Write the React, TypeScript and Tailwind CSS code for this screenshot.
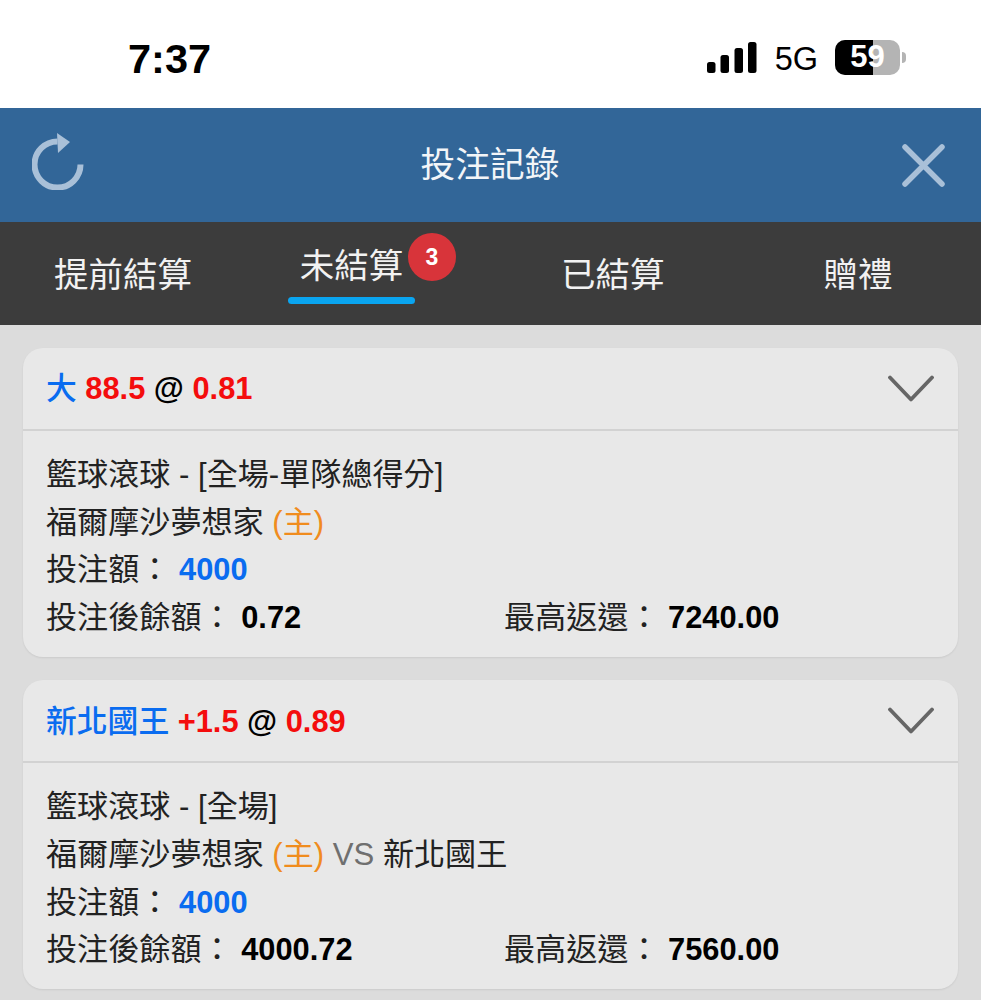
import React from 'react';

const font = { fontFamily: '"Liberation Sans", "Noto Sans CJK TC", sans-serif' };

const Chevron = () => (
    <svg width="46" height="27" viewBox="0 0 46 27" fill="none" stroke="#666666" strokeWidth="3.8" strokeLinecap="round" strokeLinejoin="round">
        <path d="M2 2.5 L23 24.5 L44 2.5" />
    </svg>
);

type Bet = {
    team: string;
    line: string;
    odds: string;
    market: string;
    away?: string;
    balance: string;
    payout: string;
};

const bets: Bet[] = [
    { team: '大', line: '88.5', odds: '0.81', market: '籃球滾球 - [全場-單隊總得分]', balance: '0.72', payout: '7240.00' },
    { team: '新北國王', line: '+1.5', odds: '0.89', market: '籃球滾球 - [全場]', away: '新北國王', balance: '4000.72', payout: '7560.00' },
];

const BetCard = ({ bet }: { bet: Bet }) => (
    <div className="rounded-[20px] bg-[#e8e8e8] shadow-[0_1px_2px_rgba(0,0,0,0.08)]">
        <div className="box-content flex h-[81px] items-center justify-between border-b-[2px] border-[#d2d2d2] pl-[23px] pr-[24px]">
            <div className="pt-[2px] text-[30.8px] font-bold text-black">
                <span className="font-medium text-[#0a6cf0]">{bet.team}</span>{' '}
                <span className="text-[#f40d0d]">{bet.line}</span> @ <span className="text-[#f40d0d]">{bet.odds}</span>
            </div>
            <Chevron />
        </div>
        <div className="px-[23px] pb-[15px] pt-[20px] text-[31.1px] leading-[47.7px] text-[#222222]">
            <div>{bet.market}</div>
            <div>
                福爾摩沙夢想家 <span className="text-[#f08c1e]">(主)</span>
                {bet.away && (
                    <>
                        {' '}
                        <span className="text-[#6f6f6f]">VS</span> {bet.away}
                    </>
                )}
            </div>
            <div>
                投注額： <span className="text-[30.8px] font-bold text-[#0a6cf0]">4000</span>
            </div>
            <div className="flex">
                <div className="w-[458px]">
                    投注後餘額： <span className="text-[30.8px] font-bold text-black">{bet.balance}</span>
                </div>
                <div>
                    最高返還： <span className="text-[30.8px] font-bold text-black">{bet.payout}</span>
                </div>
            </div>
        </div>
    </div>
);

export default function App() {
    return (
        <div className="h-[1000px] w-[981px] overflow-hidden bg-[#dcdcdc]" style={font}>
            <div className="flex h-[108px] items-center justify-between bg-white pl-[128px] pr-[75px] pt-[10px]">
                <span className="text-[41.5px] font-bold text-black">7:37</span>
                <div className="flex items-center">
                    <svg className="mb-[4px]" width="50" height="31" viewBox="0 0 50 31" fill="#000000">
                        <rect x="0" y="20" width="8.5" height="11" rx="2.5" />
                        <rect x="13.5" y="13" width="8.5" height="18" rx="2.5" />
                        <rect x="27.5" y="6" width="8.5" height="25" rx="2.5" />
                        <rect x="41" y="0" width="8.5" height="31" rx="2.5" />
                    </svg>
                    <span className="ml-[18px] text-[32.5px] text-black">5G</span>
                    <div className="relative mb-[4px] ml-[17px] flex h-[35px] w-[65px] items-center justify-center overflow-hidden rounded-[10px] bg-[#b4b4b4]">
                        <div className="absolute inset-y-0 left-0 w-[38px] bg-black" />
                        <span className="relative text-[31px] font-bold text-white">59</span>
                    </div>
                    <div className="mb-[4px] ml-[2px] h-[11px] w-[4px] rounded-r-full bg-[#b4b4b4]" />
                </div>
            </div>

            <div className="flex h-[114px] items-center justify-between bg-[#326698] pl-[32px] pr-[36px]">
                <svg className="mb-[7px]" width="52" height="57" viewBox="0 0 52 57" fill="none">
                    <path d="M48.5 31.5 A23 23 0 1 1 25.5 8.5" stroke="#a9c0d8" strokeWidth="6" />
                    <path d="M25 0 L38 9 L26 20 Z" fill="#a9c0d8" />
                </svg>
                <span className="-ml-[6px] text-[34.7px] text-[#f2f5f8]">投注記錄</span>
                <svg width="43" height="43" viewBox="0 0 43 43" stroke="#a9c0d8" strokeWidth="5.5" strokeLinecap="round">
                    <path d="M3 3 L40 40 M40 3 L3 40" />
                </svg>
            </div>

            <div className="flex h-[103px] bg-[#3c3c3c] pl-[54px] text-[34.5px] text-[#f2f2f2]">
                <div className="mt-[28px]">提前結算</div>
                <div className="relative ml-[96px] mt-[19px] w-[127px] text-center">
                    未結算
                    <span className="absolute left-[120px] top-[-8px] flex h-[48px] w-[48px] items-center justify-center rounded-full bg-[#d8343a] text-[23px] font-bold text-white">
                        3
                    </span>
                    <div className="absolute left-0 top-[56px] h-[7px] w-[127px] rounded-full bg-[#0aa5f0]" />
                </div>
                <div className="ml-[146px] mt-[28px]">已結算</div>
                <div className="ml-[159px] mt-[28px]">贈禮</div>
            </div>

            <div className="flex flex-col gap-[23.5px] px-[23px] pt-[23px]">
                {bets.map((bet) => (
                    <BetCard key={bet.team} bet={bet} />
                ))}
            </div>
        </div>
    );
}
